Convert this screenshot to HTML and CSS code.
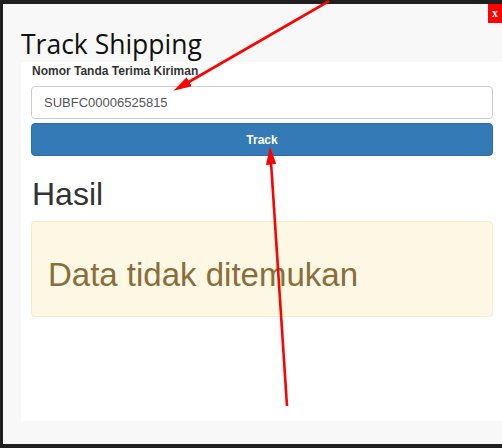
FILE: index.html
```html
<!DOCTYPE html>
<html lang="en">
<head>
  <meta charset="UTF-8" />
  <title>Track Shipping</title>
  <link rel="stylesheet" href="styles.css">
</head>
<body>
<div class="backdrop">
  <div class="modal">
    <button class="close">x</button>
    <h1 class="modal-title">Track Shipping</h1>
    <div class="panel">
      <label class="label" for="resi">Nomor Tanda Terima Kiriman</label>
      <input id="resi" class="field" type="text" value="SUBFC00006525815" />
      <button class="btn">Track</button>
      <h2 class="result-title">Hasil</h2>
      <div class="alert">Data tidak ditemukan</div>
    </div>
  </div>
</div>
<svg class="marks" width="502" height="448" viewBox="0 0 502 448">
  <defs>
    <marker id="head" markerWidth="7" markerHeight="4" refX="1" refY="2" orient="auto" markerUnits="strokeWidth">
      <path d="M0,0 L7,2 L0,4 z" fill="#f00" />
    </marker>
  </defs>
  <line x1="329" y1="1" x2="187" y2="83" stroke="#f00" stroke-width="2.6" marker-end="url(#head)" />
  <line x1="287" y1="406" x2="271" y2="162" stroke="#f00" stroke-width="2.6" marker-end="url(#head)" />
</svg>
</body>
</html>
```

FILE: styles.css
```css
body {
  margin: 0;
  background-color: #202020;
  font-family: "Liberation Sans", Arial, Helvetica, sans-serif;
  color: #333;
}

.backdrop {
  height: 448px;
  padding: 4px 0 0 3px;
  box-sizing: border-box;
  overflow: hidden;
}

.modal {
  position: relative;
  background-color: #f8f8f8;
  height: 440px;
  padding-top: 22px;
  box-sizing: border-box;
}

.close {
  position: absolute;
  top: 0;
  right: 0;
  width: 14px;
  height: 19px;
  padding: 0;
  border: none;
  background-color: #f00;
  color: #fff;
  font-family: "Liberation Serif", serif;
  font-weight: bold;
  font-size: 12px;
  line-height: 19px;
}

.modal-title {
  margin: 0 0 0 18px;
  font-family: "Open Sans", sans-serif;
  font-weight: normal;
  font-size: 26.5px;
  line-height: 36px;
  color: #111;
}

.panel {
  margin-left: 18px;
  height: 359px;
  background-color: #fff;
  padding: 2px 9px 0 10px;
  box-sizing: border-box;
}

.label {
  display: block;
  margin-left: 1px;
  font-size: 12px;
  font-weight: bold;
  line-height: 14px;
  color: #333;
}

.field {
  display: block;
  width: 100%;
  height: 33px;
  margin-top: 8px;
  padding: 0 12px;
  box-sizing: border-box;
  border: 1px solid #ccc;
  border-radius: 4px;
  font-family: "Liberation Sans", Arial, sans-serif;
  font-size: 13px;
  color: #555;
}

.btn {
  display: block;
  width: 100%;
  height: 33px;
  margin-top: 4px;
  border: 1px solid #2e6da4;
  border-radius: 4px;
  background-color: #337ab7;
  color: #fff;
  font-family: "Liberation Sans", Arial, sans-serif;
  font-size: 12px;
  font-weight: bold;
}

.result-title {
  margin: 20px 0 0 1px;
  font-size: 32px;
  font-weight: normal;
  line-height: 36px;
  color: #333;
}

.alert {
  margin-top: 9px;
  height: 96px;
  box-sizing: border-box;
  padding: 35px 16px 0;
  background-color: #fcf8e3;
  border: 1px solid #faebcc;
  border-radius: 4px;
  color: #8a6d3b;
  font-size: 33px;
  line-height: 36px;
}

.marks {
  position: absolute;
  top: 0;
  left: 0;
  pointer-events: none;
}
```
